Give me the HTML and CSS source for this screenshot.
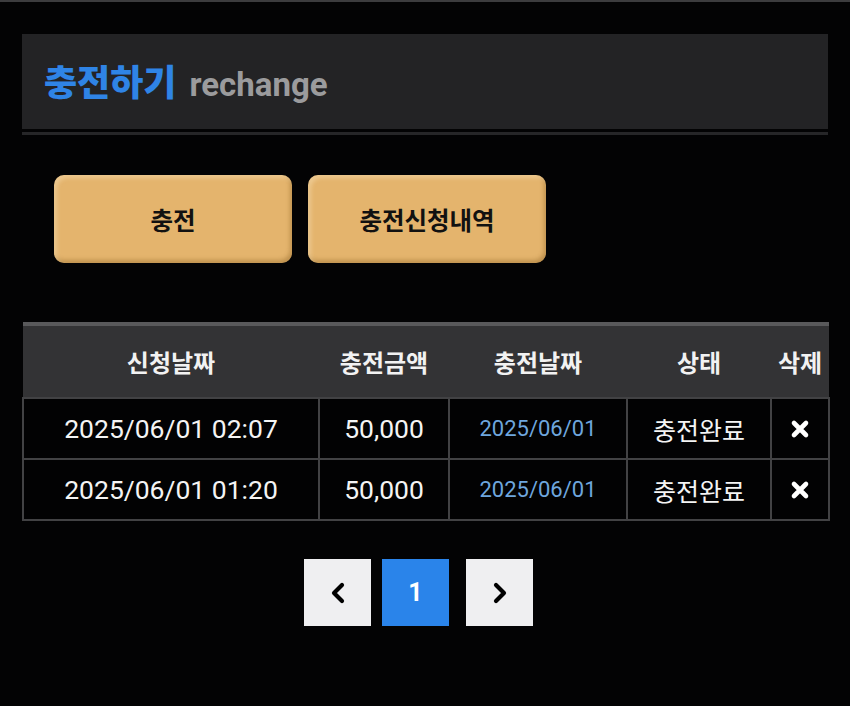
FILE: index.html
```html
<!DOCTYPE html>
<html lang="ko">
<head>
<meta charset="utf-8">
<title>충전하기</title>
<link rel="stylesheet" href="styles.css">
</head>
<body>
<div class="topline"></div>
<main class="page">
  <header class="head">
    <h1 class="title"><span class="ko">충전하기</span><span class="en">rechange</span></h1>
  </header>
  <div class="divider"></div>
  <div class="actions">
    <button class="gold-btn">충전</button>
    <button class="gold-btn">충전신청내역</button>
  </div>
  <table class="list">
    <colgroup>
      <col class="c1"><col class="c2"><col class="c3"><col class="c4"><col class="c5">
    </colgroup>
    <thead>
      <tr><th>신청날짜</th><th>충전금액</th><th>충전날짜</th><th>상태</th><th>삭제</th></tr>
    </thead>
    <tbody>
      <tr>
        <td>2025/06/01 02:07</td>
        <td>50,000</td>
        <td class="blue">2025/06/01</td>
        <td class="status">충전완료</td>
        <td class="del"><svg width="20" height="20" viewBox="0 0 20 20"><path d="M4 4 L16 16 M16 4 L4 16" stroke="#fff" stroke-width="4.6" stroke-linecap="round"/></svg></td>
      </tr>
      <tr>
        <td>2025/06/01 01:20</td>
        <td>50,000</td>
        <td class="blue">2025/06/01</td>
        <td class="status">충전완료</td>
        <td class="del"><svg width="20" height="20" viewBox="0 0 20 20"><path d="M4 4 L16 16 M16 4 L4 16" stroke="#fff" stroke-width="4.6" stroke-linecap="round"/></svg></td>
      </tr>
    </tbody>
  </table>
  <nav class="pager">
    <a class="pg nav"><svg width="18" height="24" viewBox="0 0 18 24"><path d="M13 4 L5 12 L13 20" fill="none" stroke="#000" stroke-width="4.2" stroke-linecap="round" stroke-linejoin="round"/></svg></a>
    <a class="pg active">1</a>
    <a class="pg nav next"><svg width="18" height="24" viewBox="0 0 18 24"><path d="M5 4 L13 12 L5 20" fill="none" stroke="#000" stroke-width="4.2" stroke-linecap="round" stroke-linejoin="round"/></svg></a>
  </nav>
</main>
</body>
</html>
```
FILE: styles.css
```css
* { box-sizing: border-box; }
html, body { margin: 0; padding: 0; }
body {
  background: #030304;
  font-family: "Roboto", "Noto Sans CJK KR", sans-serif;
  color: #fff;
  width: 850px;
  height: 706px;
  overflow: hidden;
}
.topline { height: 2px; background: #3c3c3e; }
.page { padding: 0 22px; }
.head {
  margin-top: 32px;
  height: 95px;
  background: #232325;
  display: flex;
  align-items: center;
  padding-left: 22px;
}
.title { margin: 0; font-weight: 700; line-height: 1; display: flex; align-items: baseline; gap: 13px; }
.title .ko { color: #2f84e6; font-family: "Noto Sans CJK KR", sans-serif; font-size: 36px; font-weight: 900; }
.title .en { color: #9b9b9d; font-family: "Roboto", sans-serif; font-size: 33px; }
.divider { margin-top: 3px; height: 3px; background: #262628; }
.actions {
  margin-top: 40px;
  padding-left: 32px;
  display: flex;
  gap: 16px;
}
.gold-btn {
  width: 238px;
  height: 88px;
  border: 0;
  border-radius: 10px;
  background: #e4b46d;
  color: #111;
  font-family: "Noto Sans CJK KR", sans-serif;
  font-size: 24.5px;
  font-weight: 700;
  box-shadow: inset 3px 3px 4px rgba(255,240,210,0.35), inset -2px -3px 4px rgba(120,80,20,0.35);
}
.list {
  margin-top: 59px;
  width: 806px;
  border-collapse: collapse;
  table-layout: fixed;
}
.c1 { width: 296px; }
.c2 { width: 130px; }
.c3 { width: 178px; }
.c4 { width: 144px; }
.c5 { width: 58px; }
.list thead tr { background: #333335; border-top: 4px solid #59595b; }
.list th {
  height: 74px;
  padding: 0;
  font-family: "Noto Sans CJK KR", sans-serif;
  font-size: 24px;
  font-weight: 700;
  color: #f2f2f2;
  text-align: center;
}
.list td {
  height: 61px;
  padding: 0;
  border: 2px solid #424244;
  background: #020203;
  text-align: center;
  font-size: 26.5px;
  color: #f4f4f4;
}
.list td.blue { font-size: 22px; color: #6ea6de; }
.list td.status { font-family: "Noto Sans CJK KR", sans-serif; font-size: 25px; }
.list td.del svg { display: block; margin: 0 auto; }
.pager {
  margin-top: 38px;
  display: flex;
  justify-content: center;
  padding-right: 13px;
  gap: 11px;
}
.pg {
  width: 67px;
  height: 67px;
  display: flex;
  align-items: center;
  justify-content: center;
}
.pg.nav { background: #efeff1; }
.pg.next { margin-left: 6px; }
.pg.active {
  background: #2a84ea;
  color: #fff;
  font-family: "Roboto", sans-serif;
  font-weight: 700;
  font-size: 25px;
}
```
